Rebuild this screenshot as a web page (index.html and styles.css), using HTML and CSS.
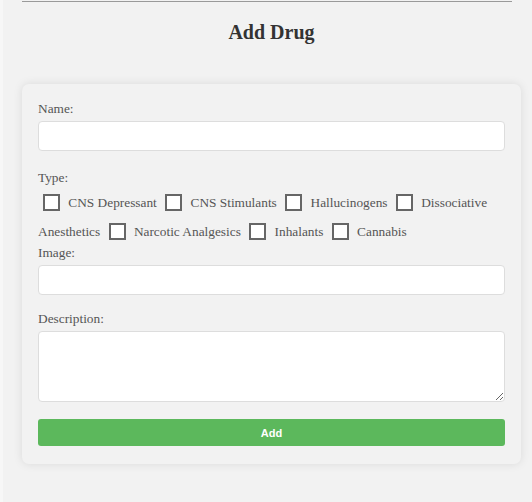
FILE: index.html
```html
<!DOCTYPE html>
<html>
<head>
<meta charset="utf-8">
<link rel="stylesheet" href="styles.css">
</head>
<body>
<div class="page">
  <hr class="rule">
  <h2 class="title">Add Drug</h2>
  <form class="card">
    <label class="field-label">Name:</label>
    <input class="text-input" type="text">
    <label class="field-label">Type:</label>
    <div class="types">
      <input class="check" type="checkbox"> <span class="opt">CNS Depressant</span>
      <input class="check" type="checkbox"> <span class="opt">CNS Stimulants</span>
      <input class="check" type="checkbox"> <span class="opt">Hallucinogens</span>
      <input class="check" type="checkbox"> <span class="opt">Dissociative</span> <span class="opt">Anesthetics</span>
      <input class="check" type="checkbox"> <span class="opt">Narcotic Analgesics</span>
      <input class="check" type="checkbox"> <span class="opt">Inhalants</span>
      <input class="check" type="checkbox"> <span class="opt">Cannabis</span>
    </div>
    <label class="field-label">Image:</label>
    <input class="text-input text-input--tight" type="text">
    <label class="field-label">Description:</label>
    <textarea class="text-area"></textarea>
    <button class="submit" type="button">Add</button>
  </form>
</div>
</body>
</html>
```

FILE: styles.css
```css
html {
  background: #f7f7f7;
}
body {
  margin: 0;
  padding-left: 3px;
  font-family: "Liberation Serif", "Times New Roman", serif;
}
.page {
  background: #f2f2f2;
  min-height: 502px;
  padding: 1px 11px 20px 19px;
  box-sizing: border-box;
}
.rule {
  margin: 0 9px 0 0;
  border: none;
  border-top: 1px solid #9a9a9a;
  height: 0;
}
.title {
  margin: 18px 0 0 0;
  text-align: center;
  font-size: 20px;
  font-weight: bold;
  color: #333;
  line-height: 24px;
}
.card {
  margin-top: 40px;
  background: #f2f2f2;
  border-radius: 7px;
  box-shadow: 0 0 10px rgba(0, 0, 0, 0.1);
  padding: 17px 16px 18px 16px;
  display: flex;
  flex-direction: column;
}
.field-label {
  display: block;
  font-size: 13.33px;
  line-height: 15px;
  color: #555;
  margin-bottom: 5px;
}
.text-input {
  display: block;
  box-sizing: border-box;
  width: 100%;
  height: 30px;
  margin: 0 0 19px 0;
  border: 1px solid #ddd;
  border-radius: 4px;
  background: #fff;
  outline: none;
}
.text-input--tight {
  margin-bottom: 16px;
}
.types {
  font-size: 13.33px;
  color: #555;
  line-height: 29px;
  margin-top: -2px;
  margin-bottom: -1px;
}
.check {
  -webkit-appearance: none;
  appearance: none;
  width: 17px;
  height: 17px;
  box-sizing: border-box;
  border: 2px solid #666;
  background: #fff;
  margin: 0 5px;
  vertical-align: -4px;
  border-radius: 0;
}
.text-area {
  display: block;
  box-sizing: border-box;
  width: 100%;
  height: 71px;
  margin: 0 0 17px 0;
  border: 1px solid #ddd;
  border-radius: 4px;
  background: #fff;
  resize: vertical;
  outline: none;
}
.submit {
  display: block;
  width: 100%;
  height: 27px;
  border: none;
  border-radius: 3px;
  background: #5cb85c;
  color: #fff;
  font-family: "Liberation Sans", Arial, sans-serif;
  font-weight: bold;
  font-size: 11px;
}
```
